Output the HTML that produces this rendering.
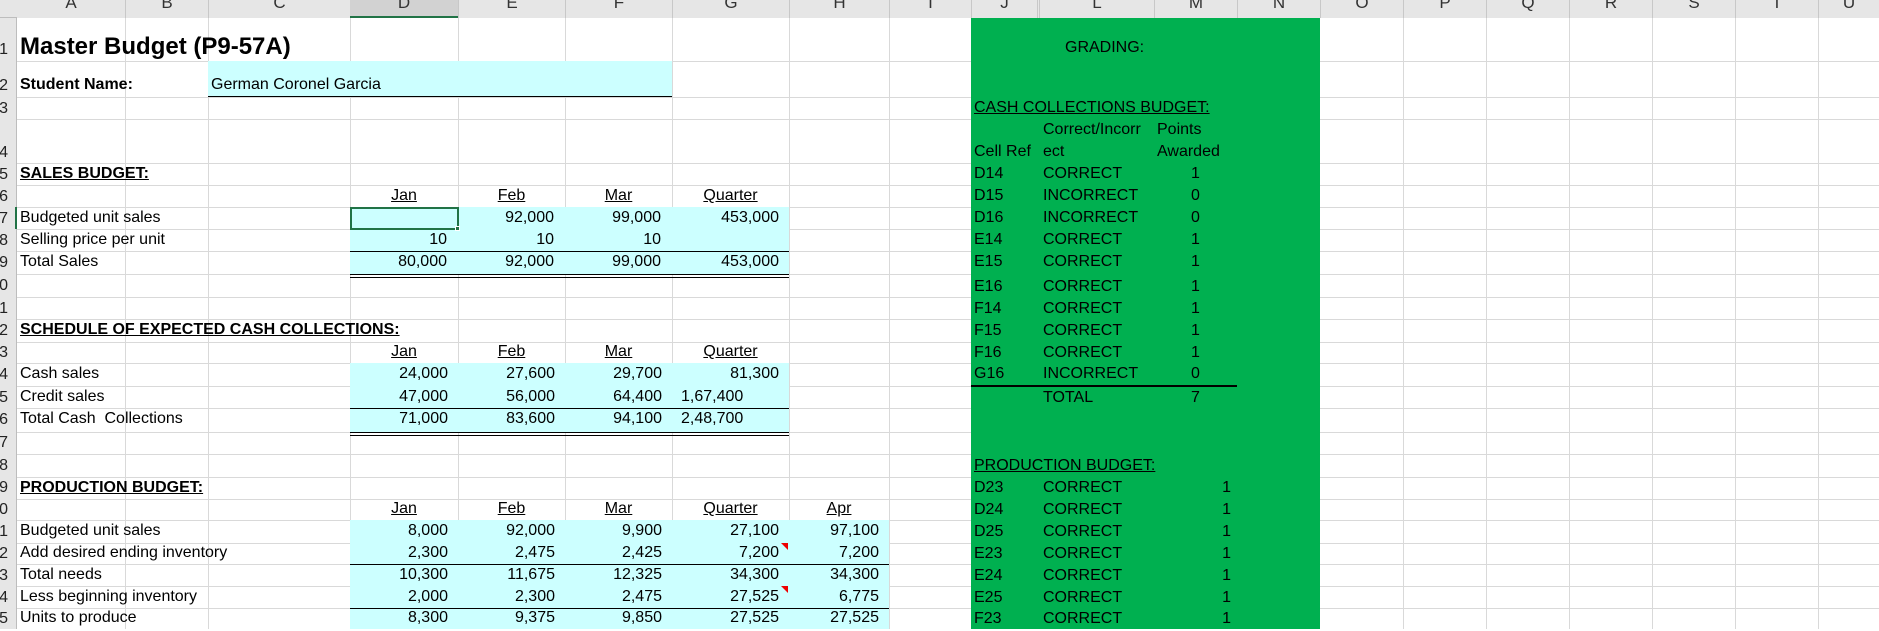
<!DOCTYPE html>
<html><head><meta charset="utf-8"><style>
*{margin:0;padding:0;box-sizing:border-box}
body{width:1879px;height:629px;overflow:hidden;background:#fff;position:relative;font-family:"Liberation Sans",Arial,sans-serif;font-size:16px;color:#000}
div{position:absolute}
.v{top:18px;bottom:0;width:1px;background:#d9d9d9}
.h{left:17px;right:0;height:1px;background:#d9d9d9}
.t{height:20px;line-height:20px;white-space:nowrap}
.r{text-align:right}
.ce{text-align:center}
.u{text-decoration:underline}
.b{font-weight:bold}
.cy{background:#ccffff}
.k{background:#000;height:1px}
.hd{top:0;height:18px;background:#e6e6e6;overflow:hidden;text-align:center;font-size:17px;line-height:6px;color:#333}
.rn{left:0;width:16px;height:22px;overflow:hidden;font-size:16px;line-height:20px;color:#222}
.rn span{position:absolute;right:8px;top:0}
</style></head><body>
<div class="v" style="left:125px"></div><div class="v" style="left:208px"></div><div class="v" style="left:350px"></div><div class="v" style="left:458px"></div><div class="v" style="left:565px"></div><div class="v" style="left:672px"></div><div class="v" style="left:789px"></div><div class="v" style="left:889px"></div><div class="v" style="left:971px"></div><div class="v" style="left:1403px"></div><div class="v" style="left:1486px"></div><div class="v" style="left:1569px"></div><div class="v" style="left:1652px"></div><div class="v" style="left:1735px"></div><div class="v" style="left:1818px"></div>
<div class="h" style="top:61px"></div><div class="h" style="top:97px"></div><div class="h" style="top:119px"></div><div class="h" style="top:163px"></div><div class="h" style="top:185px"></div><div class="h" style="top:207px"></div><div class="h" style="top:229px"></div><div class="h" style="top:251px"></div><div class="h" style="top:274px"></div><div class="h" style="top:297px"></div><div class="h" style="top:319px"></div><div class="h" style="top:342px"></div><div class="h" style="top:363px"></div><div class="h" style="top:386px"></div><div class="h" style="top:408px"></div><div class="h" style="top:432px"></div><div class="h" style="top:454px"></div><div class="h" style="top:477px"></div><div class="h" style="top:499px"></div><div class="h" style="top:520px"></div><div class="h" style="top:543px"></div><div class="h" style="top:564px"></div><div class="h" style="top:586px"></div><div class="h" style="top:608px"></div>
<div class="cy" style="left:208px;top:61px;width:464px;height:36px"></div>
<div class="cy" style="left:350px;top:207px;width:439px;height:67px"></div>
<div class="cy" style="left:350px;top:363px;width:439px;height:69px"></div>
<div class="cy" style="left:350px;top:520px;width:539px;height:109px"></div>
<div style="left:971px;top:18px;width:349px;height:611px;background:#00b050"></div>
<div class="k" style="left:208px;top:96px;width:464px"></div>
<div class="k" style="left:350px;top:251px;width:439px"></div>
<div class="k" style="left:350px;top:274px;width:439px"></div><div class="k" style="left:350px;top:277px;width:439px"></div>
<div class="k" style="left:350px;top:408px;width:439px"></div>
<div class="k" style="left:350px;top:432px;width:439px"></div><div class="k" style="left:350px;top:435px;width:439px"></div>
<div class="k" style="left:350px;top:564px;width:539px"></div>
<div class="k" style="left:350px;top:608px;width:539px"></div>
<div class="k" style="left:971px;top:385px;width:266px;height:2px"></div>
<div style="left:350px;top:207px;width:109px;height:23px;border:2px solid #217346"></div>
<div style="left:455px;top:226px;width:5px;height:5px;background:#217346;border:1px solid #fff"></div>
<div style="left:781px;top:543px;width:0;height:0;border-top:7px solid #e00;border-left:7px solid transparent"></div>
<div style="left:781px;top:586px;width:0;height:0;border-top:7px solid #e00;border-left:7px solid transparent"></div>
<div style="left:0;top:0;width:1879px;height:18px;background:#e6e6e6;border-bottom:1px solid #bdbdbd"></div>
<div class="hd" style="left:17px;width:108px">A</div><div class="hd" style="left:125px;width:83px;border-left:1px solid #c8c8c8">B</div><div class="hd" style="left:208px;width:142px;border-left:1px solid #c8c8c8">C</div><div class="hd" style="left:350px;width:108px;background:#d2d2d2;border-bottom:2px solid #217346">D</div><div class="hd" style="left:458px;width:107px;border-left:1px solid #c8c8c8">E</div><div class="hd" style="left:565px;width:107px;border-left:1px solid #c8c8c8">F</div><div class="hd" style="left:672px;width:117px;border-left:1px solid #c8c8c8">G</div><div class="hd" style="left:789px;width:100px;border-left:1px solid #c8c8c8">H</div><div class="hd" style="left:889px;width:82px;border-left:1px solid #c8c8c8">I</div><div class="hd" style="left:971px;width:66px;border-left:1px solid #c8c8c8">J</div><div class="hd" style="left:1037px;width:117px;border-left:3px double #c8c8c8">L</div><div class="hd" style="left:1154px;width:83px;border-left:1px solid #c8c8c8">M</div><div class="hd" style="left:1237px;width:83px;border-left:1px solid #c8c8c8">N</div><div class="hd" style="left:1320px;width:83px;border-left:1px solid #c8c8c8">O</div><div class="hd" style="left:1403px;width:83px;border-left:1px solid #c8c8c8">P</div><div class="hd" style="left:1486px;width:83px;border-left:1px solid #c8c8c8">Q</div><div class="hd" style="left:1569px;width:83px;border-left:1px solid #c8c8c8">R</div><div class="hd" style="left:1652px;width:83px;border-left:1px solid #c8c8c8">S</div><div class="hd" style="left:1735px;width:83px;border-left:1px solid #c8c8c8">T</div><div class="hd" style="left:1818px;width:61px;border-left:1px solid #c8c8c8">U</div>
<div style="left:0;top:18px;width:17px;height:611px;background:#e6e6e6;border-right:1px solid #bdbdbd"></div>
<div style="left:15px;top:207px;width:2px;height:22px;background:#217346"></div>
<div class="rn" style="top:40px"><span>1</span></div><div class="rn" style="top:76px"><span>2</span></div><div class="rn" style="top:99px"><span>3</span></div><div class="rn" style="top:143px"><span>4</span></div><div class="rn" style="top:165px"><span>5</span></div><div class="rn" style="top:187px"><span>6</span></div><div class="rn" style="top:209px"><span>7</span></div><div class="rn" style="top:231px"><span>8</span></div><div class="rn" style="top:253px"><span>9</span></div><div class="rn" style="top:276px"><span>10</span></div><div class="rn" style="top:299px"><span>11</span></div><div class="rn" style="top:321px"><span>12</span></div><div class="rn" style="top:343px"><span>13</span></div><div class="rn" style="top:365px"><span>14</span></div><div class="rn" style="top:388px"><span>15</span></div><div class="rn" style="top:410px"><span>16</span></div><div class="rn" style="top:433px"><span>17</span></div><div class="rn" style="top:456px"><span>18</span></div><div class="rn" style="top:478px"><span>19</span></div><div class="rn" style="top:500px"><span>20</span></div><div class="rn" style="top:522px"><span>21</span></div><div class="rn" style="top:544px"><span>22</span></div><div class="rn" style="top:566px"><span>23</span></div><div class="rn" style="top:588px"><span>24</span></div><div class="rn" style="top:609px"><span>25</span></div>
<div class="t b" style="left:20px;top:33px;font-size:24px;line-height:28px;height:28px">Master Budget (P9-57A)</div>
<div class="t b" style="left:20px;top:75px">Student Name:</div>
<div class="t" style="left:211px;top:75px">German Coronel Garcia</div>
<div class="t b u" style="left:20px;top:164px">SALES BUDGET:</div>
<div class="t ce u" style="left:350px;width:108px;top:186px">Jan</div><div class="t ce u" style="left:458px;width:107px;top:186px">Feb</div><div class="t ce u" style="left:565px;width:107px;top:186px">Mar</div><div class="t ce u" style="left:672px;width:117px;top:186px">Quarter</div>
<div class="t" style="left:20px;top:208px">Budgeted unit sales</div>
<div class="t r" style="left:458px;width:96px;top:208px">92,000</div><div class="t r" style="left:565px;width:96px;top:208px">99,000</div><div class="t r" style="left:672px;width:107px;top:208px">453,000</div>
<div class="t" style="left:20px;top:230px">Selling price per unit</div>
<div class="t r" style="left:350px;width:97px;top:230px">10</div><div class="t r" style="left:458px;width:96px;top:230px">10</div><div class="t r" style="left:565px;width:96px;top:230px">10</div>
<div class="t" style="left:20px;top:252px">Total Sales</div>
<div class="t r" style="left:350px;width:97px;top:252px">80,000</div><div class="t r" style="left:458px;width:96px;top:252px">92,000</div><div class="t r" style="left:565px;width:96px;top:252px">99,000</div><div class="t r" style="left:672px;width:107px;top:252px">453,000</div>
<div class="t b u" style="left:20px;top:320px">SCHEDULE OF EXPECTED CASH COLLECTIONS:</div>
<div class="t ce u" style="left:350px;width:108px;top:342px">Jan</div><div class="t ce u" style="left:458px;width:107px;top:342px">Feb</div><div class="t ce u" style="left:565px;width:107px;top:342px">Mar</div><div class="t ce u" style="left:672px;width:117px;top:342px">Quarter</div>
<div class="t" style="left:20px;top:364px">Cash sales</div>
<div class="t r" style="left:350px;width:98px;top:364px">24,000</div><div class="t r" style="left:458px;width:97px;top:364px">27,600</div><div class="t r" style="left:565px;width:97px;top:364px">29,700</div><div class="t r" style="left:672px;width:107px;top:364px">81,300</div>
<div class="t" style="left:20px;top:387px">Credit sales</div>
<div class="t r" style="left:350px;width:98px;top:387px">47,000</div><div class="t r" style="left:458px;width:97px;top:387px">56,000</div><div class="t r" style="left:565px;width:97px;top:387px">64,400</div><div class="t" style="left:681px;top:387px">1,67,400</div>
<div class="t" style="left:20px;top:409px">Total Cash&nbsp; Collections</div>
<div class="t r" style="left:350px;width:98px;top:409px">71,000</div><div class="t r" style="left:458px;width:97px;top:409px">83,600</div><div class="t r" style="left:565px;width:97px;top:409px">94,100</div><div class="t" style="left:681px;top:409px">2,48,700</div>
<div class="t b u" style="left:20px;top:478px">PRODUCTION BUDGET:</div>
<div class="t ce u" style="left:350px;width:108px;top:499px">Jan</div><div class="t ce u" style="left:458px;width:107px;top:499px">Feb</div><div class="t ce u" style="left:565px;width:107px;top:499px">Mar</div><div class="t ce u" style="left:672px;width:117px;top:499px">Quarter</div><div class="t ce u" style="left:789px;width:100px;top:499px">Apr</div>
<div class="t" style="left:20px;top:521px">Budgeted unit sales</div>
<div class="t r" style="left:350px;width:98px;top:521px">8,000</div><div class="t r" style="left:458px;width:97px;top:521px">92,000</div><div class="t r" style="left:565px;width:97px;top:521px">9,900</div><div class="t r" style="left:672px;width:107px;top:521px">27,100</div><div class="t r" style="left:789px;width:90px;top:521px">97,100</div>
<div class="t" style="left:20px;top:543px">Add desired ending inventory</div>
<div class="t r" style="left:350px;width:98px;top:543px">2,300</div><div class="t r" style="left:458px;width:97px;top:543px">2,475</div><div class="t r" style="left:565px;width:97px;top:543px">2,425</div><div class="t r" style="left:672px;width:107px;top:543px">7,200</div><div class="t r" style="left:789px;width:90px;top:543px">7,200</div>
<div class="t" style="left:20px;top:565px">Total needs</div>
<div class="t r" style="left:350px;width:98px;top:565px">10,300</div><div class="t r" style="left:458px;width:97px;top:565px">11,675</div><div class="t r" style="left:565px;width:97px;top:565px">12,325</div><div class="t r" style="left:672px;width:107px;top:565px">34,300</div><div class="t r" style="left:789px;width:90px;top:565px">34,300</div>
<div class="t" style="left:20px;top:587px">Less beginning inventory</div>
<div class="t r" style="left:350px;width:98px;top:587px">2,000</div><div class="t r" style="left:458px;width:97px;top:587px">2,300</div><div class="t r" style="left:565px;width:97px;top:587px">2,475</div><div class="t r" style="left:672px;width:107px;top:587px">27,525</div><div class="t r" style="left:789px;width:90px;top:587px">6,775</div>
<div class="t" style="left:20px;top:608px">Units to produce</div>
<div class="t r" style="left:350px;width:98px;top:608px">8,300</div><div class="t r" style="left:458px;width:97px;top:608px">9,375</div><div class="t r" style="left:565px;width:97px;top:608px">9,850</div><div class="t r" style="left:672px;width:107px;top:608px">27,525</div><div class="t r" style="left:789px;width:90px;top:608px">27,525</div>
<div class="t" style="left:1065px;top:38px">GRADING:</div>
<div class="t u" style="left:974px;top:98px">CASH COLLECTIONS BUDGET:</div>
<div class="t" style="left:1043px;top:120px">Correct/Incorr</div><div class="t" style="left:1157px;top:120px">Points</div>
<div class="t" style="left:974px;top:142px">Cell Ref</div><div class="t" style="left:1043px;top:142px">ect</div><div class="t" style="left:1157px;top:142px">Awarded</div>
<div class="t" style="left:974px;top:164px">D14</div><div class="t" style="left:1043px;top:164px">CORRECT</div><div class="t ce" style="left:1154px;width:83px;top:164px">1</div>
<div class="t" style="left:974px;top:186px">D15</div><div class="t" style="left:1043px;top:186px">INCORRECT</div><div class="t ce" style="left:1154px;width:83px;top:186px">0</div>
<div class="t" style="left:974px;top:208px">D16</div><div class="t" style="left:1043px;top:208px">INCORRECT</div><div class="t ce" style="left:1154px;width:83px;top:208px">0</div>
<div class="t" style="left:974px;top:230px">E14</div><div class="t" style="left:1043px;top:230px">CORRECT</div><div class="t ce" style="left:1154px;width:83px;top:230px">1</div>
<div class="t" style="left:974px;top:252px">E15</div><div class="t" style="left:1043px;top:252px">CORRECT</div><div class="t ce" style="left:1154px;width:83px;top:252px">1</div>
<div class="t" style="left:974px;top:277px">E16</div><div class="t" style="left:1043px;top:277px">CORRECT</div><div class="t ce" style="left:1154px;width:83px;top:277px">1</div>
<div class="t" style="left:974px;top:299px">F14</div><div class="t" style="left:1043px;top:299px">CORRECT</div><div class="t ce" style="left:1154px;width:83px;top:299px">1</div>
<div class="t" style="left:974px;top:321px">F15</div><div class="t" style="left:1043px;top:321px">CORRECT</div><div class="t ce" style="left:1154px;width:83px;top:321px">1</div>
<div class="t" style="left:974px;top:343px">F16</div><div class="t" style="left:1043px;top:343px">CORRECT</div><div class="t ce" style="left:1154px;width:83px;top:343px">1</div>
<div class="t" style="left:974px;top:364px">G16</div><div class="t" style="left:1043px;top:364px">INCORRECT</div><div class="t ce" style="left:1154px;width:83px;top:364px">0</div>
<div class="t" style="left:1043px;top:388px">TOTAL</div><div class="t ce" style="left:1154px;width:83px;top:388px">7</div>
<div class="t u" style="left:974px;top:456px">PRODUCTION BUDGET:</div>
<div class="t" style="left:974px;top:478px">D23</div><div class="t" style="left:1043px;top:478px">CORRECT</div><div class="t r" style="left:1154px;width:77px;top:478px">1</div>
<div class="t" style="left:974px;top:500px">D24</div><div class="t" style="left:1043px;top:500px">CORRECT</div><div class="t r" style="left:1154px;width:77px;top:500px">1</div>
<div class="t" style="left:974px;top:522px">D25</div><div class="t" style="left:1043px;top:522px">CORRECT</div><div class="t r" style="left:1154px;width:77px;top:522px">1</div>
<div class="t" style="left:974px;top:544px">E23</div><div class="t" style="left:1043px;top:544px">CORRECT</div><div class="t r" style="left:1154px;width:77px;top:544px">1</div>
<div class="t" style="left:974px;top:566px">E24</div><div class="t" style="left:1043px;top:566px">CORRECT</div><div class="t r" style="left:1154px;width:77px;top:566px">1</div>
<div class="t" style="left:974px;top:588px">E25</div><div class="t" style="left:1043px;top:588px">CORRECT</div><div class="t r" style="left:1154px;width:77px;top:588px">1</div>
<div class="t" style="left:974px;top:609px">F23</div><div class="t" style="left:1043px;top:609px">CORRECT</div><div class="t r" style="left:1154px;width:77px;top:609px">1</div>
</body></html>
